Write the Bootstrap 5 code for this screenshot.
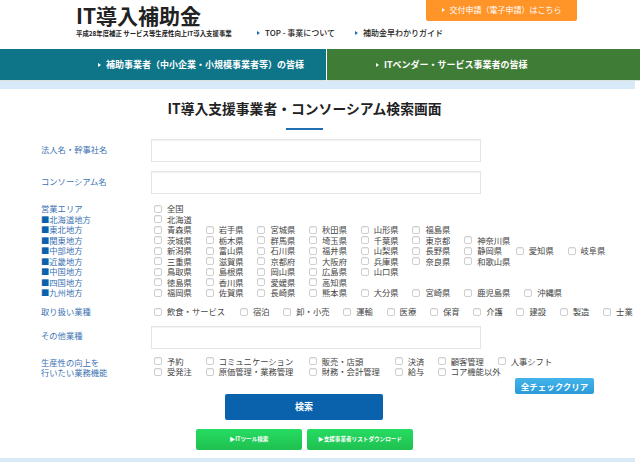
<!DOCTYPE html>
<html lang="ja">
<head>
<meta charset="utf-8">
<title>IT導入補助金</title>
<link href="https://cdn.jsdelivr.net/npm/bootstrap@5.3.0/dist/css/bootstrap.min.css" rel="stylesheet">
<style>
html,body{height:462px;overflow:hidden;background:#fff;}
body{font-family:"Noto Sans CJK JP","Liberation Sans",sans-serif;font-size:8.3px;line-height:10.5px;color:#333;width:640px;}
a{text-decoration:none;}
.hdr{height:49px;}
.hdr-left{width:257px;padding:3px 0 0 76px;}
.site-name{font-size:21px;line-height:25px;font-weight:700;color:#222;margin:0;}
.site-sub{font-size:6.4px;line-height:8px;font-weight:700;color:#222;white-space:nowrap;margin-top:2px;}
.hdr-right{width:383px;}
.apply-btn{margin-left:169px;width:151px;height:21px;background:#ff9429;color:#fff;font-size:8px;border-radius:0 0 2px 2px;padding:0;line-height:20px;border:0;}
.hdr-nav{margin-top:7px;font-size:8px;line-height:10px;color:#222;}
.hdr-nav a{color:#222;font-weight:500;}
.hdr-nav .tri{border-left-color:#1f6fb2;}
.tri{display:inline-block;border-left:3px solid #fff;border-top:2.5px solid transparent;border-bottom:2.5px solid transparent;vertical-align:1px;margin-right:5px;}
.audience{height:32px;}
.aud-a{width:326px;background:#0e7488;padding-left:98px;margin-right:1px;}
.aud-b{width:313px;background:#3f7d37;padding-left:49px;}
.aud-a,.aud-b{color:#fff;font-size:9px;font-weight:700;line-height:31px;border-bottom:1px solid #d8e2de;}
.band{height:8px;width:635px;background:#d8e9f8;}
.page-title{font-size:13.8px;line-height:20px;font-weight:700;color:#222;text-align:center;width:609px;margin:9px 0 0;white-space:nowrap;}
.title-rule{width:37px;height:2px;background:#1f6fb2;margin:10px 0 9px 286px;}
.frow{display:flex;}
.flabel{width:110px;margin-left:41px;color:#3c73b2;flex:none;}
.txt-in.form-control{width:330px;height:23px;border:1px solid #e4e4e4;border-radius:0;box-shadow:inset 0 1px 1px #f2f2f2;padding:0 6px;font-size:9px;}
.field-a{align-items:center;margin-bottom:9px;}
.field-a .flabel{padding-bottom:3px;}
.field-c{align-items:center;margin-bottom:7px;}
.field-c .flabel{padding-bottom:3px;}
.area{margin-top:3px;}
.reg i{font-style:normal;color:#0a62ad;}
.reg{display:block;}
.checks{flex:none;}
.crow{display:flex;height:10.5px;padding-left:3px;white-space:nowrap;}
.ci{display:flex;align-items:center;flex:none;width:51.7px;}
.ci .form-check-input{width:8px;height:8px;margin:1px 5px 0 0;flex:none;border:1px solid #cfcfcf;border-radius:2px;box-shadow:inset 0 1px 1px #eee;}
.w60{width:60px;}
.ci label{color:#444;}
.biz{margin-top:8px;margin-bottom:9px;}
.biz .crow,.biz .flabel{height:11px;}
.w86{width:86px;}.w43{width:43.3px;}.w60b{width:60px;}
.w103{width:103px;}.w86b{width:86px;}.w43b{width:43px;}
.prod .flabel{padding-top:1px;}
.clear-wrap{margin:0 0 0 515px;}
.clear-btn{width:79px;height:16px;padding:0;border:0;border-radius:2px;background:linear-gradient(#43b4ea,#2a9bd8);color:#fff;font-size:8.5px;font-weight:700;line-height:16px;display:block;}
.search-wrap{margin:0 0 0 225px;}
.search-btn{width:158px;height:26px;padding:0;border:0;border-radius:2px;background:#0a62ad;color:#fff;font-size:9px;font-weight:700;display:block;}
.green-row{margin:9px 0 0 196px;gap:5px;}
.green-btn{width:106px;height:21px;padding:0;border:0;border-radius:2px;background:linear-gradient(#26dc62,#1fc04f);color:#fff;font-size:5.6px;font-weight:700;line-height:21px;}
.band-end{margin-top:8px;}
</style>
</head>
<body>
<header class="hdr d-flex">
  <div class="hdr-left">
    <h1 class="site-name">IT導入補助金</h1>
    <div class="site-sub">平成28年度補正 サービス等生産性向上IT導入支援事業</div>
  </div>
  <div class="hdr-right">
    <a class="btn apply-btn d-block text-center" href="#"><span class="tri"></span>交付申請（電子申請）はこちら</a>
    <nav class="hdr-nav d-flex">
      <a href="#" class="me-3"><span class="tri"></span>TOP - 事業について</a>
      <a href="#" class="ms-1"><span class="tri"></span>補助金早わかりガイド</a>
    </nav>
  </div>
</header>
<div class="audience d-flex">
  <a class="aud-a" href="#"><span class="tri"></span>補助事業者（中小企業・小規模事業者等）の皆様</a>
  <a class="aud-b" href="#"><span class="tri"></span>ITベンダー・サービス事業者の皆様</a>
</div>
<div class="band"></div>
<h2 class="page-title">IT導入支援事業者・コンソーシアム検索画面</h2>
<div class="title-rule"></div>
<form>
  <div class="frow field-a"><div class="flabel">法人名・幹事社名</div><input class="form-control txt-in" type="text"></div>
  <div class="frow field-a"><div class="flabel">コンソーシアム名</div><input class="form-control txt-in" type="text"></div>
  <div class="frow area">
    <div class="flabel">
      <span class="reg">営業エリア</span>
      <span class="reg"><i>■</i>北海道地方</span>
      <span class="reg"><i>■</i>東北地方</span>
      <span class="reg"><i>■</i>関東地方</span>
      <span class="reg"><i>■</i>中部地方</span>
      <span class="reg"><i>■</i>近畿地方</span>
      <span class="reg"><i>■</i>中国地方</span>
      <span class="reg"><i>■</i>四国地方</span>
      <span class="reg"><i>■</i>九州地方</span>
    </div>
    <div class="checks">
      <div class="crow"><div class="ci"><input class="form-check-input" type="checkbox"><label>全国</label></div></div>
      <div class="crow"><div class="ci"><input class="form-check-input" type="checkbox"><label>北海道</label></div></div>
      <div class="crow"><div class="ci"><input class="form-check-input" type="checkbox"><label>青森県</label></div><div class="ci"><input class="form-check-input" type="checkbox"><label>岩手県</label></div><div class="ci"><input class="form-check-input" type="checkbox"><label>宮城県</label></div><div class="ci"><input class="form-check-input" type="checkbox"><label>秋田県</label></div><div class="ci"><input class="form-check-input" type="checkbox"><label>山形県</label></div><div class="ci"><input class="form-check-input" type="checkbox"><label>福島県</label></div></div>
      <div class="crow"><div class="ci"><input class="form-check-input" type="checkbox"><label>茨城県</label></div><div class="ci"><input class="form-check-input" type="checkbox"><label>栃木県</label></div><div class="ci"><input class="form-check-input" type="checkbox"><label>群馬県</label></div><div class="ci"><input class="form-check-input" type="checkbox"><label>埼玉県</label></div><div class="ci"><input class="form-check-input" type="checkbox"><label>千葉県</label></div><div class="ci"><input class="form-check-input" type="checkbox"><label>東京都</label></div><div class="ci"><input class="form-check-input" type="checkbox"><label>神奈川県</label></div></div>
      <div class="crow"><div class="ci"><input class="form-check-input" type="checkbox"><label>新潟県</label></div><div class="ci"><input class="form-check-input" type="checkbox"><label>富山県</label></div><div class="ci"><input class="form-check-input" type="checkbox"><label>石川県</label></div><div class="ci"><input class="form-check-input" type="checkbox"><label>福井県</label></div><div class="ci"><input class="form-check-input" type="checkbox"><label>山梨県</label></div><div class="ci"><input class="form-check-input" type="checkbox"><label>長野県</label></div><div class="ci"><input class="form-check-input" type="checkbox"><label>静岡県</label></div><div class="ci"><input class="form-check-input" type="checkbox"><label>愛知県</label></div><div class="ci"><input class="form-check-input" type="checkbox"><label>岐阜県</label></div></div>
      <div class="crow"><div class="ci"><input class="form-check-input" type="checkbox"><label>三重県</label></div><div class="ci"><input class="form-check-input" type="checkbox"><label>滋賀県</label></div><div class="ci"><input class="form-check-input" type="checkbox"><label>京都府</label></div><div class="ci"><input class="form-check-input" type="checkbox"><label>大阪府</label></div><div class="ci"><input class="form-check-input" type="checkbox"><label>兵庫県</label></div><div class="ci"><input class="form-check-input" type="checkbox"><label>奈良県</label></div><div class="ci"><input class="form-check-input" type="checkbox"><label>和歌山県</label></div></div>
      <div class="crow"><div class="ci"><input class="form-check-input" type="checkbox"><label>鳥取県</label></div><div class="ci"><input class="form-check-input" type="checkbox"><label>島根県</label></div><div class="ci"><input class="form-check-input" type="checkbox"><label>岡山県</label></div><div class="ci"><input class="form-check-input" type="checkbox"><label>広島県</label></div><div class="ci"><input class="form-check-input" type="checkbox"><label>山口県</label></div></div>
      <div class="crow"><div class="ci"><input class="form-check-input" type="checkbox"><label>徳島県</label></div><div class="ci"><input class="form-check-input" type="checkbox"><label>香川県</label></div><div class="ci"><input class="form-check-input" type="checkbox"><label>愛媛県</label></div><div class="ci"><input class="form-check-input" type="checkbox"><label>高知県</label></div></div>
      <div class="crow"><div class="ci"><input class="form-check-input" type="checkbox"><label>福岡県</label></div><div class="ci"><input class="form-check-input" type="checkbox"><label>佐賀県</label></div><div class="ci"><input class="form-check-input" type="checkbox"><label>長崎県</label></div><div class="ci"><input class="form-check-input" type="checkbox"><label>熊本県</label></div><div class="ci"><input class="form-check-input" type="checkbox"><label>大分県</label></div><div class="ci"><input class="form-check-input" type="checkbox"><label>宮崎県</label></div><div class="ci w60"><input class="form-check-input" type="checkbox"><label>鹿児島県</label></div><div class="ci"><input class="form-check-input" type="checkbox"><label>沖縄県</label></div></div>
    </div>
  </div>
  <div class="frow biz">
    <div class="flabel">取り扱い業種</div>
    <div class="checks"><div class="crow">
      <div class="ci w86"><input class="form-check-input" type="checkbox"><label>飲食・サービス</label></div><div class="ci w43"><input class="form-check-input" type="checkbox"><label>宿泊</label></div><div class="ci w60b"><input class="form-check-input" type="checkbox"><label>卸・小売</label></div><div class="ci w43"><input class="form-check-input" type="checkbox"><label>運輸</label></div><div class="ci w43"><input class="form-check-input" type="checkbox"><label>医療</label></div><div class="ci w43"><input class="form-check-input" type="checkbox"><label>保育</label></div><div class="ci w43"><input class="form-check-input" type="checkbox"><label>介護</label></div><div class="ci w43"><input class="form-check-input" type="checkbox"><label>建設</label></div><div class="ci w43"><input class="form-check-input" type="checkbox"><label>製造</label></div><div class="ci w43"><input class="form-check-input" type="checkbox"><label>士業</label></div>
    </div></div>
  </div>
  <div class="frow field-c"><div class="flabel">その他業種</div><input class="form-control txt-in" type="text"></div>
  <div class="frow prod">
    <div class="flabel">生産性の向上を<br>行いたい業務機能</div>
    <div class="checks">
      <div class="crow"><div class="ci"><input class="form-check-input" type="checkbox"><label>予約</label></div><div class="ci w103"><input class="form-check-input" type="checkbox"><label>コミュニケーション</label></div><div class="ci w86b"><input class="form-check-input" type="checkbox"><label>販売・店頭</label></div><div class="ci w43b"><input class="form-check-input" type="checkbox"><label>決済</label></div><div class="ci w60b"><input class="form-check-input" type="checkbox"><label>顧客管理</label></div><div class="ci"><input class="form-check-input" type="checkbox"><label>人事シフト</label></div></div>
      <div class="crow"><div class="ci"><input class="form-check-input" type="checkbox"><label>受発注</label></div><div class="ci w103"><input class="form-check-input" type="checkbox"><label>原価管理・業務管理</label></div><div class="ci w86b"><input class="form-check-input" type="checkbox"><label>財務・会計管理</label></div><div class="ci w43b"><input class="form-check-input" type="checkbox"><label>給与</label></div><div class="ci w60b"><input class="form-check-input" type="checkbox"><label>コア機能以外</label></div></div>
    </div>
  </div>
  <div class="clear-wrap"><button class="btn clear-btn" type="button">全チェッククリア</button></div>
  <div class="search-wrap"><button class="btn search-btn" type="submit">検索</button></div>
  <div class="green-row d-flex">
    <button class="btn green-btn" type="button">▶ITツール検索</button>
    <button class="btn green-btn" type="button">▶支援事業者リストダウンロード</button>
  </div>
</form>
<div class="band band-end"></div>
<script src="https://cdn.jsdelivr.net/npm/bootstrap@5.3.0/dist/js/bootstrap.bundle.min.js"></script>
</body>
</html>
